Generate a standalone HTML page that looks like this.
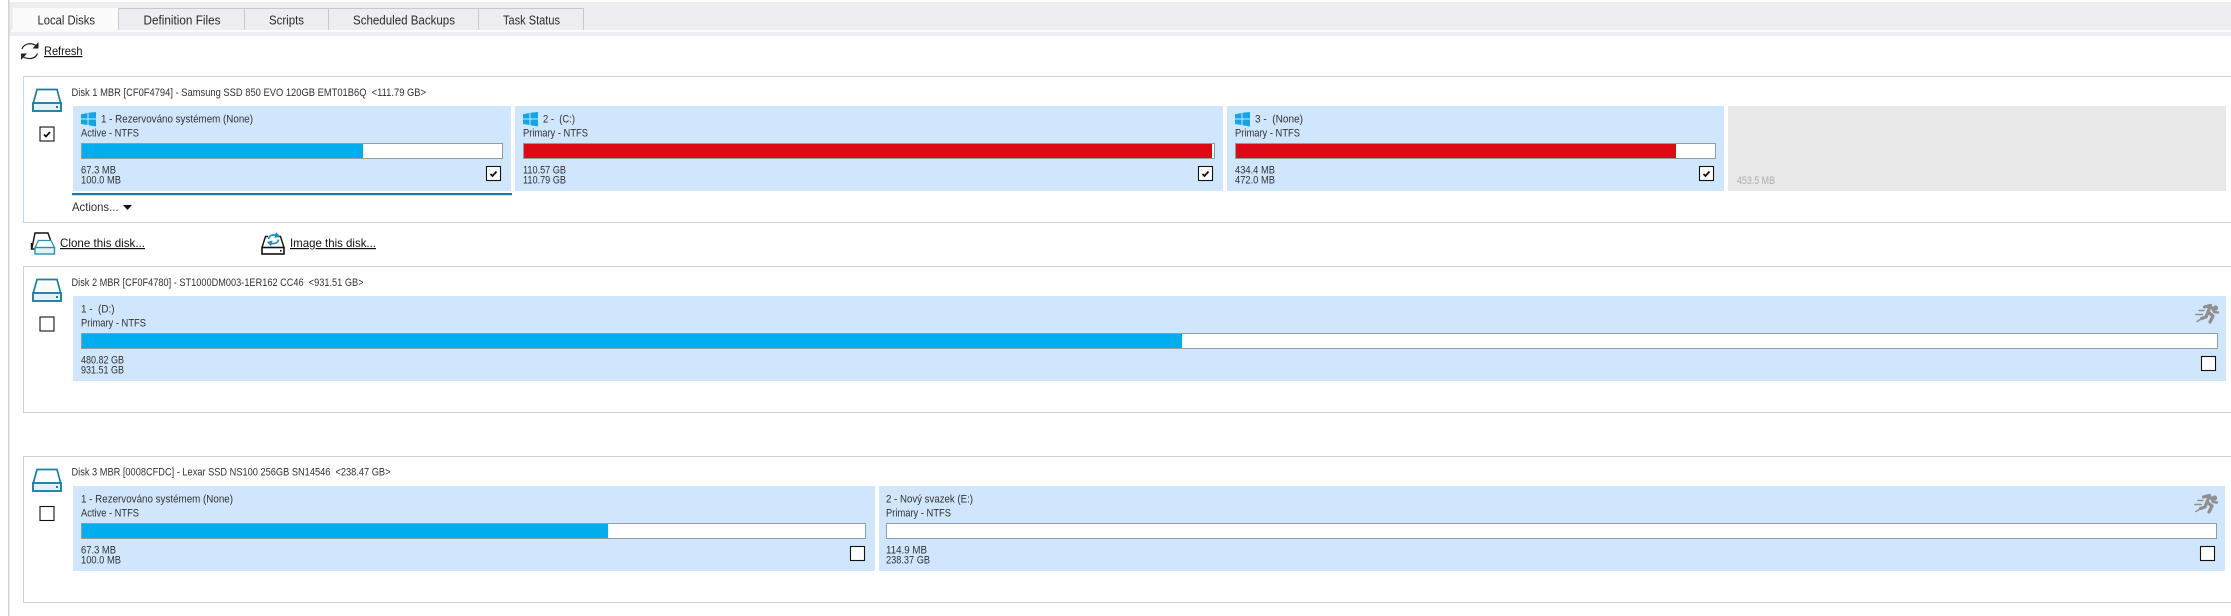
<!DOCTYPE html>
<html>
<head>
<meta charset="utf-8">
<style>
html,body{margin:0;padding:0;background:#fff;width:2231px;height:616px;overflow:hidden}
svg{display:block}
text{font-family:"Liberation Sans",sans-serif;font-size:11px;fill:#333;white-space:pre;filter:blur(.25px)}
.tab{font-size:13px;fill:#2a2a2a}
.link{font-size:12px;fill:#111;text-decoration:underline}
.part{fill:#d0e6fc}
.bar{fill:#fff;stroke:#8f9ea6;stroke-width:1}
.cb{fill:#fff;stroke:#111;stroke-width:1.1}
.ck{fill:none;stroke:#111;stroke-width:1.8}
</style>
</head>
<body>
<svg xmlns="http://www.w3.org/2000/svg" width="2231" height="616" viewBox="0 0 2231 616">
<defs>
<g id="disk">
<path d="M1.2 15.5 L5 1.5 H25 L28.8 15.5" fill="#fff" stroke="#1a7fa6" stroke-width="1.7"/>
<rect x="1" y="15" width="28" height="8" fill="#e4f2f8" stroke="#1a7fa6" stroke-width="1.9"/>
<rect x="24" y="18" width="2" height="2" fill="#1a7fa6"/>
</g>
<g id="win" fill="#14a5e8">
<path d="M0 2.2 L6.5 1 V6.5 H0 Z"/>
<path d="M7.5 0.8 L15 0 V6.5 H7.5 Z"/>
<path d="M0 7.5 H6.5 V13 L0 12 Z"/>
<path d="M7.5 7.5 H15 V14.5 L7.5 13.2 Z"/>
</g>
<g id="run" fill="none" stroke="#8f8f8f" stroke-linecap="round" stroke-linejoin="round">
<circle cx="20.5" cy="5" r="2.6" fill="#8f8f8f" stroke="none"/>
<path d="M9.5 4 L15.5 2.4 L13 9 L18 13 L15 19" stroke-width="3.2"/>
<path d="M13 9 L11 14 L6.5 15.5" stroke-width="3.2"/>
<path d="M16.5 4 L19 9 L23 9.5" stroke-width="2.4"/>
<path d="M4 7.5 H9" stroke-width="1.5"/>
<path d="M0.8 11.5 H7.5" stroke-width="1.5"/>
<path d="M2 18.5 L6 16" stroke-width="1.5"/>
</g>
</defs>

<!-- tab band -->
<rect x="9" y="2" width="2222" height="34" fill="#eeeef2"/>
<rect x="11" y="30" width="2220" height="2" fill="#fbfbfc"/>
<rect x="8" y="0" width="1.6" height="616" fill="#d4d4d6"/>
<path d="M118.5 8.5 H583.5 V30 M118.5 8.5 V30 M244.5 8.5 V30 M328.5 8.5 V30 M478.5 8.5 V30" fill="none" stroke="#c9c9cd"/>
<rect x="13" y="8" width="105" height="24" fill="#fbfbfc"/>
<text class="tab" x="37.5" y="24.5" textLength="57.5" lengthAdjust="spacingAndGlyphs">Local Disks</text>
<text class="tab" x="143.5" y="24.5" textLength="77" lengthAdjust="spacingAndGlyphs">Definition Files</text>
<text class="tab" x="269" y="24.5" textLength="35" lengthAdjust="spacingAndGlyphs">Scripts</text>
<text class="tab" x="353" y="24.5" textLength="102" lengthAdjust="spacingAndGlyphs">Scheduled Backups</text>
<text class="tab" x="503" y="24.5" textLength="57" lengthAdjust="spacingAndGlyphs">Task Status</text>

<!-- refresh -->
<g fill="none" stroke="#222" stroke-width="1.2">
<path d="M22 49 C24 43.5 31 42 37 46"/>
<path d="M37.5 53.5 C35.5 59 28.5 60 22.5 56.5"/>
</g>
<path d="M38.5 42 V48.5 H32.5 Z" fill="#222"/>
<path d="M21 60 V53.5 H27 Z" fill="#222"/>
<text class="link" x="44" y="55" textLength="38.5" lengthAdjust="spacingAndGlyphs">Refresh</text>

<!-- disk 1 panel -->
<rect x="23.5" y="76.5" width="2220" height="146" fill="#fff" stroke="#c3d9e8"/>
<use href="#disk" x="32" y="88"/>
<rect class="cb" x="40" y="127" width="14" height="14"/>
<path class="ck" d="M44 134.5 L46 136.5 L50 132"/>
<text x="71.5" y="95.8" textLength="354.5" lengthAdjust="spacingAndGlyphs">Disk 1 MBR [CF0F4794] - Samsung SSD 850 EVO 120GB EMT01B6Q  &lt;111.79 GB&gt;</text>

<rect class="part" x="73" y="106" width="438" height="85"/>
<use href="#win" x="81" y="112"/>
<text x="101" y="122.3" textLength="152" lengthAdjust="spacingAndGlyphs">1 - Rezervováno systémem (None)</text>
<text x="81" y="136.3" textLength="58" lengthAdjust="spacingAndGlyphs">Active - NTFS</text>
<rect class="bar" x="81.5" y="143.5" width="421" height="15"/>
<rect x="82" y="144" width="281" height="14" fill="#00adef"/>
<text x="81" y="173.5" textLength="35" lengthAdjust="spacingAndGlyphs">67.3 MB</text>
<text x="81" y="183.5" textLength="40" lengthAdjust="spacingAndGlyphs">100.0 MB</text>
<rect class="cb" x="486.5" y="166.5" width="14" height="14"/>
<path class="ck" d="M490.5 174 L492.5 176 L496.5 171.5"/>
<rect x="72" y="193" width="440" height="2.2" fill="#1f74a8"/>
<text x="72" y="211" style="font-size:12px" textLength="46.5" lengthAdjust="spacingAndGlyphs">Actions...</text>
<path d="M123 205 H132 L127.5 210 Z" fill="#111"/>

<rect class="part" x="515" y="106" width="708" height="85"/>
<use href="#win" x="523" y="112"/>
<text x="543" y="122.3" textLength="32" lengthAdjust="spacingAndGlyphs">2 -  (C:)</text>
<text x="523" y="136.3" textLength="65" lengthAdjust="spacingAndGlyphs">Primary - NTFS</text>
<rect class="bar" x="523.5" y="143.5" width="691" height="15"/>
<rect x="524" y="144" width="688" height="14" fill="#dc0a14"/>
<text x="523" y="173.5" textLength="43" lengthAdjust="spacingAndGlyphs">110.57 GB</text>
<text x="523" y="183.5" textLength="43" lengthAdjust="spacingAndGlyphs">110.79 GB</text>
<rect class="cb" x="1198.5" y="166.5" width="14" height="14"/>
<path class="ck" d="M1202.5 174 L1204.5 176 L1208.5 171.5"/>

<rect class="part" x="1227" y="106" width="497" height="85"/>
<use href="#win" x="1235" y="112"/>
<text x="1255" y="122.3" textLength="48" lengthAdjust="spacingAndGlyphs">3 -  (None)</text>
<text x="1235" y="136.3" textLength="65" lengthAdjust="spacingAndGlyphs">Primary - NTFS</text>
<rect class="bar" x="1235.5" y="143.5" width="480" height="15"/>
<rect x="1236" y="144" width="440" height="14" fill="#dc0a14"/>
<text x="1235" y="173.5" textLength="40" lengthAdjust="spacingAndGlyphs">434.4 MB</text>
<text x="1235" y="183.5" textLength="40" lengthAdjust="spacingAndGlyphs">472.0 MB</text>
<rect class="cb" x="1699.5" y="166.5" width="14" height="14"/>
<path class="ck" d="M1703.5 174 L1705.5 176 L1709.5 171.5"/>

<rect x="1728" y="106" width="498" height="85" fill="#e8e8e8"/>
<text x="1737" y="184" textLength="38" lengthAdjust="spacingAndGlyphs" style="fill:#aeaeae">453.5 MB</text>

<!-- clone / image -->
<g fill="none">
<path d="M32 248 L35 233 H48 L50.5 240" stroke="#111" stroke-width="1.4"/>
<path d="M31.5 243 V249 H35" stroke="#111" stroke-width="1.4"/>
<path d="M35 247.5 L38.5 240.5 H51 L54.5 247.5" stroke="#2a8fb5" stroke-width="1.3" fill="#fff"/>
<rect x="35" y="247.5" width="19.5" height="6.5" fill="#e4f2f8" stroke="#2a8fb5" stroke-width="1.4"/>
</g>
<text class="link" x="60" y="247" textLength="85" lengthAdjust="spacingAndGlyphs">Clone this disk...</text>

<g fill="none">
<path d="M262 247.5 L265.5 236.5 H268 M278 236.5 H280.5 L284 247.5" stroke="#111" stroke-width="1.4"/>
<rect x="262" y="247.5" width="22" height="6.5" fill="#fff" stroke="#111" stroke-width="1.6"/>
<path d="M268.5 239 C269 235.5 273 234 276.5 235.5" stroke="#1b8fc9" stroke-width="1.7"/>
<path d="M278.5 239.5 C278 243 274 244.5 270.5 243" stroke="#1b8fc9" stroke-width="1.7"/>
</g>
<path d="M276 232 L280 236.5 L274.5 238 Z" fill="#1b8fc9"/>
<path d="M271 246.5 L267 242 L272.5 240.5 Z" fill="#1b8fc9"/>
<rect x="280" y="250" width="1.6" height="1.6" fill="#111"/>
<text class="link" x="290" y="247" textLength="86" lengthAdjust="spacingAndGlyphs">Image this disk...</text>

<!-- disk 2 panel -->
<rect x="23.5" y="266.5" width="2220" height="146" fill="#fff" stroke="#d0d0d2"/>
<use href="#disk" x="32" y="278"/>
<rect class="cb" x="40" y="317" width="14" height="14"/>
<text x="71.5" y="286" textLength="292" lengthAdjust="spacingAndGlyphs">Disk 2 MBR [CF0F4780] - ST1000DM003-1ER162 CC46  &lt;931.51 GB&gt;</text>
<rect class="part" x="73" y="296" width="2153" height="85"/>
<text x="81" y="312.3" textLength="33.5" lengthAdjust="spacingAndGlyphs">1 -  (D:)</text>
<text x="81" y="326.3" textLength="65" lengthAdjust="spacingAndGlyphs">Primary - NTFS</text>
<rect class="bar" x="81.5" y="333.5" width="2136" height="15"/>
<rect x="82" y="334" width="1100" height="14" fill="#00adef"/>
<text x="81" y="363.5" textLength="43" lengthAdjust="spacingAndGlyphs">480.82 GB</text>
<text x="81" y="373.5" textLength="43" lengthAdjust="spacingAndGlyphs">931.51 GB</text>
<rect class="cb" x="2201.5" y="356.5" width="14" height="14"/>
<use href="#run" x="2195" y="303"/>

<!-- disk 3 panel -->
<rect x="23.5" y="456.5" width="2220" height="146" fill="#fff" stroke="#d0d0d2"/>
<use href="#disk" x="32" y="468"/>
<rect class="cb" x="40" y="506.5" width="14" height="14"/>
<text x="71.5" y="475.5" textLength="319" lengthAdjust="spacingAndGlyphs">Disk 3 MBR [0008CFDC] - Lexar SSD NS100 256GB SN14546  &lt;238.47 GB&gt;</text>

<rect class="part" x="73" y="486" width="802" height="85"/>
<text x="81" y="502.3" textLength="152" lengthAdjust="spacingAndGlyphs">1 - Rezervováno systémem (None)</text>
<text x="81" y="516.3" textLength="58" lengthAdjust="spacingAndGlyphs">Active - NTFS</text>
<rect class="bar" x="81.5" y="523.5" width="784" height="15"/>
<rect x="82" y="524" width="526" height="14" fill="#00adef"/>
<text x="81" y="553.5" textLength="35" lengthAdjust="spacingAndGlyphs">67.3 MB</text>
<text x="81" y="563.5" textLength="40" lengthAdjust="spacingAndGlyphs">100.0 MB</text>
<rect class="cb" x="850.5" y="546.5" width="14" height="14"/>

<rect class="part" x="879" y="486" width="1346" height="85"/>
<text x="886" y="502.3" textLength="87" lengthAdjust="spacingAndGlyphs">2 - Nový svazek (E:)</text>
<text x="886" y="516.3" textLength="65" lengthAdjust="spacingAndGlyphs">Primary - NTFS</text>
<rect class="bar" x="886.5" y="523.5" width="1330" height="15"/>
<text x="886" y="553.5" textLength="41" lengthAdjust="spacingAndGlyphs">114.9 MB</text>
<text x="886" y="563.5" textLength="44" lengthAdjust="spacingAndGlyphs">238.37 GB</text>
<rect class="cb" x="2200.5" y="546.5" width="14" height="14"/>
<use href="#run" x="2194" y="493"/>
</svg>
</body>
</html>
